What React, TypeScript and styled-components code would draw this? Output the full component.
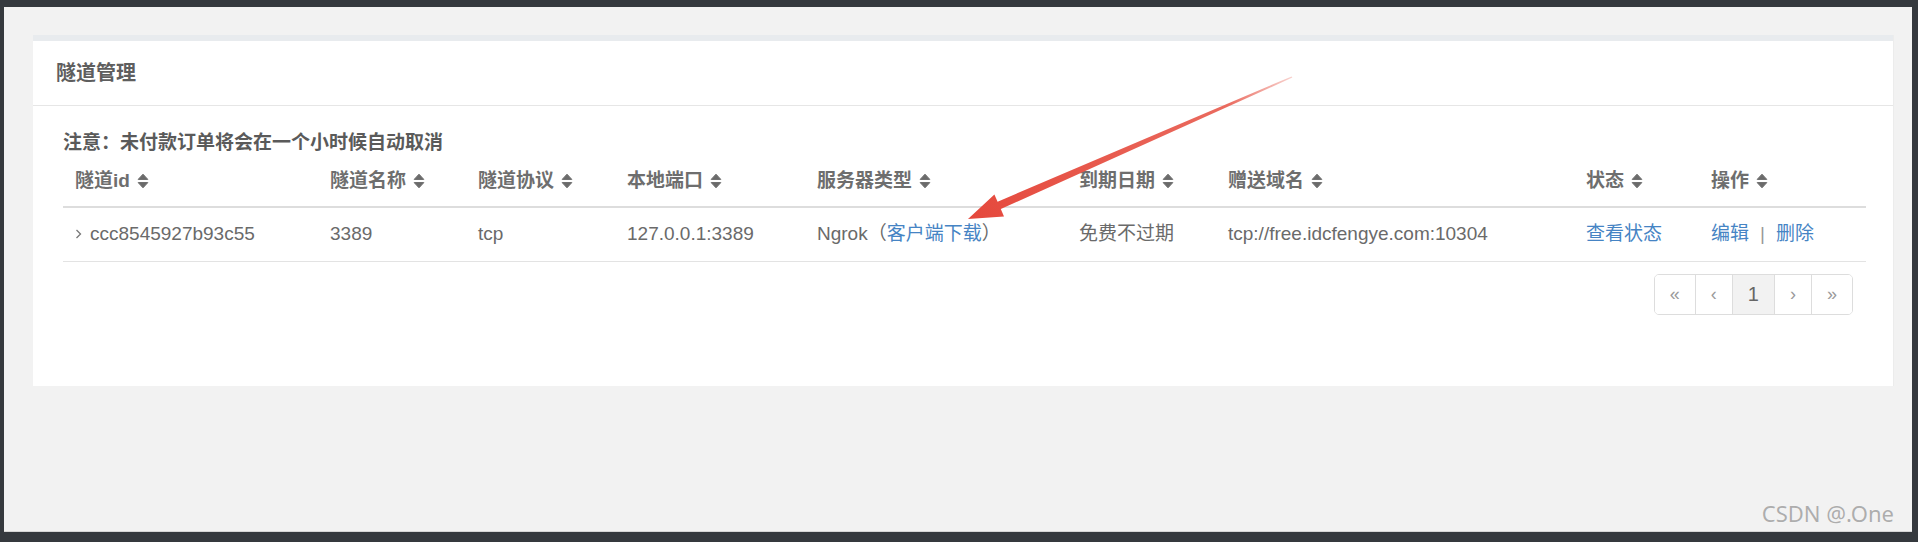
import React from "react";
import styled, { createGlobalStyle } from "styled-components";

const GlobalStyle = createGlobalStyle`
  html, body {
    margin: 0;
    padding: 0;
    background: #35393e;
  }
  * { box-sizing: border-box; }
`;

const Frame = styled.div`
  position: relative;
  width: 1918px;
  height: 542px;
  padding: 7px 6px 10px 4px;
  background: #35393e;
  font-family: "Liberation Sans", Arial, "Noto Sans CJK SC", sans-serif;
`;

const Screen = styled.div`
  position: relative;
  height: 525px;
  background: #f2f2f2;
  border-bottom: 1px solid #d6d6d6;
  padding: 28px 18px 0 29px;
`;

const Panel = styled.section`
  height: 351px;
  background: #fff;
  border-right: 1px solid #ececec;
  display: flex;
  flex-direction: column;
`;

const TopStrip = styled.div`
  height: 6px;
  background: #e8ebee;
`;

const PanelHeader = styled.header`
  height: 65px;
  line-height: 64px;
  padding-left: 23px;
  border-bottom: 1px solid #e6e6e6;
  font-size: 20px;
  font-weight: bold;
  color: #5e5e5e;
`;

const PanelBody = styled.div`
  padding: 24px 28px 0 30px;
`;

const Notice = styled.div`
  font-size: 19px;
  line-height: 26px;
  font-weight: bold;
  color: #5a5a5a;
`;

const Table = styled.table`
  width: 100%;
  table-layout: fixed;
  border-collapse: collapse;
  font-size: 19px;
`;

const Col = styled.col<{ $w: number }>`
  width: ${(p) => p.$w}px;
`;

const Th = styled.th`
  text-align: left;
  padding: 12px 12px;
  line-height: 26px;
  font-weight: bold;
  color: #6e6e6e;
  border-bottom: 2px solid #dddddd;
  white-space: nowrap;
`;

const Td = styled.td`
  padding: 13px 12px 14px;
  line-height: 26px;
  color: #6a6a6a;
  border-bottom: 1px solid #e3e3e3;
  white-space: nowrap;
`;

const SortIcon = styled.svg`
  width: 12px;
  height: 16px;
  margin-left: 7px;
  vertical-align: -2px;
`;

const Chevron = styled.svg`
  width: 7px;
  height: 10px;
  margin-right: 8px;
  vertical-align: 1px;
`;

const Link = styled.a`
  color: #4684c4;
  text-decoration: none;
`;

const Paren = styled.span`
  color: #6a6a6a;
`;

const Sep = styled.span`
  color: #999;
  padding: 0 11px;
`;

const PagerRow = styled.div`
  display: flex;
  justify-content: flex-end;
  padding-right: 12px;
  margin-top: 12px;
`;

const Pager = styled.ul`
  display: flex;
  margin: 0;
  padding: 0;
  list-style: none;
  border: 1px solid #dddddd;
  border-radius: 5px;
  overflow: hidden;
  height: 41px;
`;

const PageItem = styled.li<{ $active?: boolean; $arrow?: boolean }>`
  display: flex;
  align-items: center;
  justify-content: center;
  padding: 0 15px;
  font-size: ${(p) => (p.$arrow ? "18px" : "20px")};
  color: ${(p) => (p.$arrow ? "#9a9a9a" : "#666")};
  background: ${(p) => (p.$active ? "#f2f2f2" : "#fff")};
  & + & {
    border-left: 1px solid #dddddd;
  }
`;

const Watermark = styled.div`
  position: absolute;
  right: 18px;
  bottom: 7px;
  font-family: "Noto Sans", "Open Sans", sans-serif;
  font-size: 22px;
  line-height: 22px;
  color: #adadad;
  text-shadow: 0 0 1px #ffffff;
`;

const ArrowLayer = styled.svg`
  position: absolute;
  left: 0;
  top: 0;
  width: 1918px;
  height: 542px;
  pointer-events: none;
`;

const Sort = () => (
  <SortIcon viewBox="0 0 12 16">
    <path d="M1.2 6.4 L6 1.2 L10.8 6.4 Z" fill="#6b6b6b" stroke="#6b6b6b" strokeWidth="1" strokeLinejoin="round" />
    <path d="M1.2 9.6 L6 14.8 L10.8 9.6 Z" fill="#6b6b6b" stroke="#6b6b6b" strokeWidth="1" strokeLinejoin="round" />
  </SortIcon>
);

const columns = [
  { title: "隧道id", w: 255 },
  { title: "隧道名称", w: 148 },
  { title: "隧道协议", w: 149 },
  { title: "本地端口", w: 190 },
  { title: "服务器类型", w: 262 },
  { title: "到期日期", w: 149 },
  { title: "赠送域名", w: 358 },
  { title: "状态", w: 125 },
  { title: "操作", w: 167 },
];

export default function App() {
  return (
    <>
      <GlobalStyle />
      <Frame>
        <Screen>
          <Panel>
            <TopStrip />
            <PanelHeader>隧道管理</PanelHeader>
            <PanelBody>
              <Notice>注意：未付款订单将会在一个小时候自动取消</Notice>
              <Table>
                <colgroup>
                  {columns.map((c) => (
                    <Col key={c.title} $w={c.w} />
                  ))}
                </colgroup>
                <thead>
                  <tr>
                    {columns.map((c) => (
                      <Th key={c.title}>
                        {c.title}
                        <Sort />
                      </Th>
                    ))}
                  </tr>
                </thead>
                <tbody>
                  <tr>
                    <Td>
                      <Chevron viewBox="0 0 7 10">
                        <path d="M1.5 1 L5.5 5 L1.5 9" fill="none" stroke="#777" strokeWidth="1.3" />
                      </Chevron>
                      ccc8545927b93c55
                    </Td>
                    <Td>3389</Td>
                    <Td>tcp</Td>
                    <Td>127.0.0.1:3389</Td>
                    <Td>
                      Ngrok<Paren>（</Paren>
                      <Link href="#">客户端下载</Link>
                      <Paren>）</Paren>
                    </Td>
                    <Td>免费不过期</Td>
                    <Td>tcp://free.idcfengye.com:10304</Td>
                    <Td>
                      <Link href="#">查看状态</Link>
                    </Td>
                    <Td>
                      <Link href="#">编辑</Link>
                      <Sep>|</Sep>
                      <Link href="#">删除</Link>
                    </Td>
                  </tr>
                </tbody>
              </Table>
              <PagerRow>
                <Pager>
                  <PageItem $arrow>«</PageItem>
                  <PageItem $arrow>‹</PageItem>
                  <PageItem $active>1</PageItem>
                  <PageItem $arrow>›</PageItem>
                  <PageItem $arrow>»</PageItem>
                </Pager>
              </PagerRow>
            </PanelBody>
          </Panel>
          <Watermark>CSDN @.One</Watermark>
        </Screen>
        <ArrowLayer viewBox="0 0 1918 542">
          <defs>
            <linearGradient id="arrowGrad" gradientUnits="userSpaceOnUse" x1="1292" y1="77" x2="968" y2="219">
              <stop offset="0" stopColor="#f8d2ce" />
              <stop offset="0.2" stopColor="#ea6b5f" />
              <stop offset="1" stopColor="#e5483c" />
            </linearGradient>
          </defs>
          <polygon
            points="1292.4,77.6 1000.8,209.1 1004,216.4 968,219 994.4,194.4 997.6,201.7 1291.6,76.4"
            fill="url(#arrowGrad)"
          />
        </ArrowLayer>
      </Frame>
    </>
  );
}
